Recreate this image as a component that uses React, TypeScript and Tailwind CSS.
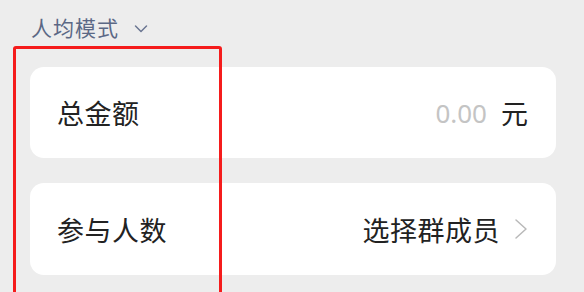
import React from "react";

export default function App() {
  return (
    <div
      className="relative w-[584px] h-[292px] overflow-hidden bg-[#ededed]"
      style={{ fontFamily: '"Noto Sans CJK SC", "Noto Sans", sans-serif' }}
    >
      <div className="flex items-center h-[56px] pl-[31px]">
        <div className="flex items-center gap-[15px] -mt-[1px]">
          <span className="text-[21px] leading-none text-[#5b6885] tracking-[1px]">人均模式</span>
          <svg width="14" height="10" viewBox="0 0 14 10" className="mt-[2px]">
            <path d="M1.5 2 L7 7.5 L12.5 2" fill="none" stroke="#6b7692" strokeWidth="1.5" strokeLinecap="round" strokeLinejoin="round" />
          </svg>
        </div>
      </div>
      <div className="flex flex-col gap-[25px] pl-[30px] pr-[28px] pt-[11px]">
        <div className="flex items-center justify-between h-[91px] bg-white rounded-[14px] pl-[27px] pr-[28px]">
          <span className="text-[27px] text-[#222] leading-none tracking-[0.5px]">总金额</span>
          <div className="flex items-center gap-[14px]">
            <span className="text-[26px] text-[#c4c4c4] leading-none" style={{ fontFamily: '"Noto Sans", sans-serif' }}>0.00</span>
            <span className="text-[27px] text-[#222] leading-none">元</span>
          </div>
        </div>
        <div className="flex items-center justify-between h-[92px] bg-white rounded-[14px] pl-[27px] pr-[28px]">
          <span className="text-[27px] text-[#222] leading-none tracking-[0.5px]">参与人数</span>
          <div className="flex items-center gap-[14px]">
            <span className="text-[27px] text-[#222] leading-none tracking-[0.5px]">选择群成员</span>
            <svg width="14" height="22" viewBox="0 0 14 22">
              <path d="M2 2 L12 11 L2 20" fill="none" stroke="#b9b9b9" strokeWidth="1.5" strokeLinecap="round" strokeLinejoin="round" />
            </svg>
          </div>
        </div>
      </div>
      <div className="absolute left-[13px] top-[46px] w-[209px] h-[280px] border-[3px] border-[#f51c1c] rounded-[3px]" />
    </div>
  );
}
